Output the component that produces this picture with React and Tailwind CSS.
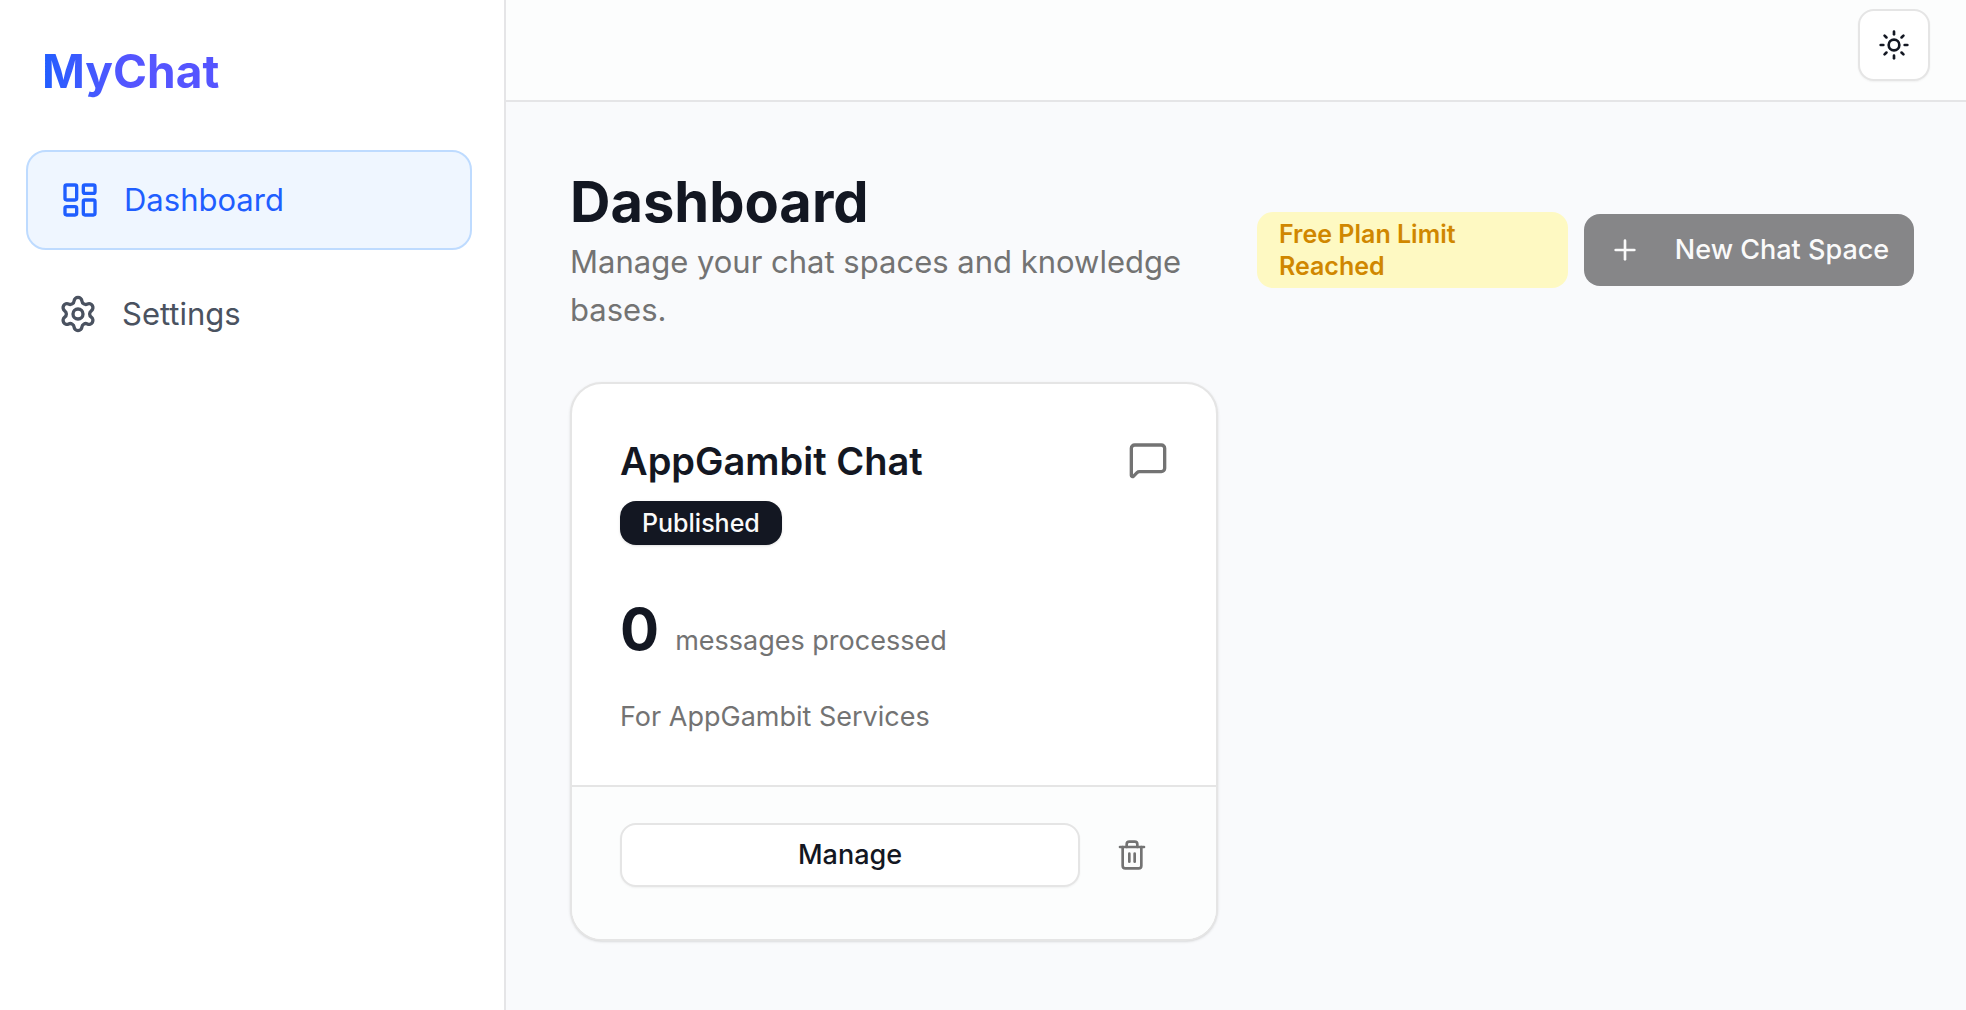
import React from "react";
import {
  LayoutDashboard,
  MessageSquare,
  Plus,
  Settings,
  Sun,
  Trash2,
} from "lucide-react";

const NAV_ITEMS = [
  { label: "Dashboard", href: "#dashboard", icon: LayoutDashboard, active: true },
  { label: "Settings", href: "#settings", icon: Settings, active: false },
];

const CHAT_SPACES = [
  {
    id: 1,
    name: "AppGambit Chat",
    status: "Published",
    messages: 0,
    description: "For AppGambit Services",
  },
];

function Sidebar() {
  return (
    <aside className="w-[506px] shrink-0 border-r-2 border-[#e5e5e7] bg-white pt-[39px] pr-8 pl-[26px]">
      <a
        href="#home"
        className="ml-4 inline-block bg-linear-to-r from-[#1f5eff] to-[#5555ff] to-50% bg-clip-text text-[46px] leading-[64px] font-bold text-transparent"
      >
        MyChat
      </a>
      <nav className="mt-[47px] flex flex-col gap-4">
        {NAV_ITEMS.map(({ label, href, icon: Icon, active }) => (
          <a
            key={label}
            href={href}
            aria-current={active ? "page" : undefined}
            className={`flex items-center gap-6 rounded-[20px] px-8 py-6 text-[31px] leading-[48px] ${
              active
                ? "border-2 border-[#bedbff] bg-[#eff6ff] text-[#1f5eff]"
                : "text-[#4a5260]"
            }`}
          >
            <Icon className="size-10" />
            {label}
          </a>
        ))}
      </nav>
    </aside>
  );
}

function Header() {
  return (
    <header className="flex justify-end border-b-2 border-[#e5e5e7] bg-[#fcfdfd] pt-[9px] pr-9 pb-[19px]">
      <button
        type="button"
        aria-label="Toggle theme"
        className="flex size-[72px] items-center justify-center rounded-2xl border-2 border-[#e5e5e5] bg-white text-[#131722] shadow-xs"
      >
        <Sun className="size-8" />
      </button>
    </header>
  );
}

function ChatSpaceCard({ space }) {
  return (
    <article className="overflow-hidden rounded-[32px] border-2 border-[#e5e5e5] bg-white shadow">
      <div className="px-12 pt-12 pb-12">
        <div className="flex items-start justify-between">
          <div>
            <h2 className="text-[38px] leading-[58px] font-semibold text-[#131722]">
              {space.name}
            </h2>
            <span className="mt-[11px] inline-block rounded-2xl bg-[#131722] px-[22px] py-1.5 text-[25px] leading-8 font-medium text-[#fafafa] shadow-sm">
              {space.status}
            </span>
          </div>
          <MessageSquare className="mt-2 size-10 text-[#737373]" />
        </div>
        <p className="mt-12 flex items-baseline gap-4 text-[27px] text-[#737373]">
          <span className="text-[58px] leading-[72px] font-bold text-[#131722]">
            {space.messages}
          </span>
          messages processed
        </p>
        <p className="mt-8 text-[27px] leading-10 text-[#737373]">
          {space.description}
        </p>
      </div>
      <div className="flex items-center gap-4 border-t-2 border-[#e5e5e5] bg-[#fcfdfd] px-12 pt-9 pb-[52px]">
        <button
          type="button"
          className="h-16 flex-1 rounded-2xl border-2 border-[#e5e5e5] bg-white text-[27px] font-medium text-[#131722] shadow-xs"
        >
          Manage
        </button>
        <button
          type="button"
          aria-label="Delete chat space"
          className="flex h-16 w-[72px] items-center justify-center text-[#737373]"
        >
          <Trash2 className="size-8" />
        </button>
      </div>
    </article>
  );
}

export default function App() {
  return (
    <div className="flex min-h-screen bg-[#f9fafc] font-['Inter',sans-serif]">
      <Sidebar />
      <div className="min-w-0 flex-1">
        <Header />
        <main className="pt-16 pr-[52px] pb-16 pl-16">
          <div className="flex items-center justify-between gap-10">
            <div className="flex-1">
              <h1 className="text-[56px] leading-[72px] font-bold text-[#131722]">
                Dashboard
              </h1>
              <p className="text-[31px] leading-[48px] text-[#737373]">
                Manage your chat spaces and knowledge bases.
              </p>
            </div>
            <div className="flex items-center gap-4">
              <p className="w-[311px] rounded-2xl bg-[#fef9c2] px-[22px] py-1.5 text-[25px] leading-8 font-semibold text-[#d08700]">
                Free Plan Limit Reached
              </p>
              <button
                type="button"
                disabled
                className="flex h-[72px] min-w-[330px] items-center justify-center gap-[34px] rounded-2xl bg-[#868688] px-6 text-[27px] font-medium whitespace-nowrap text-[#fafafa]"
              >
                <Plus className="size-8" />
                New Chat Space
              </button>
            </div>
          </div>
          <div className="mt-12 grid grid-cols-2 gap-12">
            {CHAT_SPACES.map((space) => (
              <ChatSpaceCard key={space.id} space={space} />
            ))}
          </div>
        </main>
      </div>
    </div>
  );
}
